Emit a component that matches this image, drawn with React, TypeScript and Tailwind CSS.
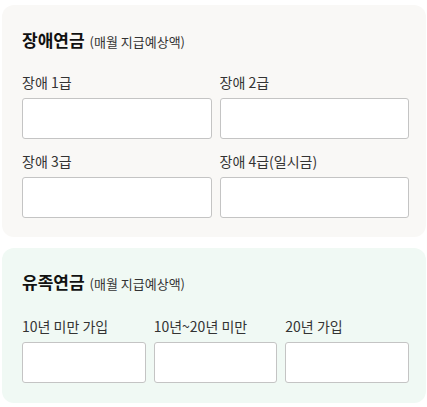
import React from "react";

const font = { fontFamily: '"Noto Sans CJK KR", "Noto Sans", sans-serif' };

const Field = ({ label }: { label: string }) => (
  <label className="flex flex-col">
    <span className="mb-[6px] text-[14px] leading-5 text-[#333]">{label}</span>
    <input
      type="text"
      className="h-[41px] w-full rounded-[3px] border border-[#c4c4c4] bg-white px-3 text-sm outline-none"
    />
  </label>
);

const Title = ({ main }: { main: string }) => (
  <h2 className="flex h-6 items-baseline gap-[5px] leading-6 text-[#111]">
    <span className="text-[17px] font-bold">{main}</span>
    <span className="text-[13px] text-[#333]">(매월 지급예상액)</span>
  </h2>
);

export default function App() {
  return (
    <div
      className="flex h-[407px] w-[427px] flex-col gap-[11px] bg-white pl-[2px] pr-[1px] pt-[5px]"
      style={font}
    >
      <section className="rounded-[12px] bg-[#f9f8f6] pb-[19px] pl-5 pr-[17px] pt-[23px]">
        <div className="mb-5">
          <Title main="장애연금" />
        </div>
        <div className="grid grid-cols-2 gap-x-2 gap-y-3">
          <Field label="장애 1급" />
          <Field label="장애 2급" />
          <Field label="장애 3급" />
          <Field label="장애 4급(일시금)" />
        </div>
      </section>
      <section className="rounded-[12px] bg-[#f0f9f4] pb-5 pl-5 pr-[17px] pt-[22px]">
        <div className="mb-[22px]">
          <Title main="유족연금" />
        </div>
        <div className="grid grid-cols-3 gap-x-2">
          <Field label="10년 미만 가입" />
          <Field label="10년~20년 미만" />
          <Field label="20년 가입" />
        </div>
      </section>
    </div>
  );
}
